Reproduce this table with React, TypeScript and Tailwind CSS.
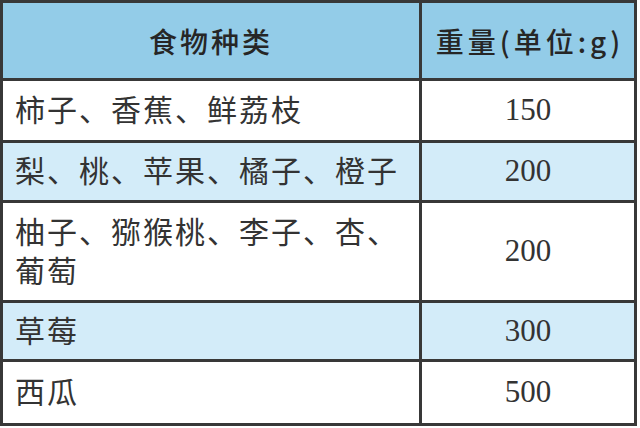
const rows = [
  { name: "柿子、香蕉、鲜荔枝", weight: "150", tint: false, h: "h-[62px]" },
  { name: "梨、桃、苹果、橘子、橙子", weight: "200", tint: true, h: "h-[60px]" },
  { name: "柚子、猕猴桃、李子、杏、葡萄", weight: "200", tint: false, h: "h-[100px]" },
  { name: "草莓", weight: "300", tint: true, h: "h-[59px]" },
  { name: "西瓜", weight: "500", tint: false, h: "h-[64px]" },
];

const cell = "border-r-[3px] border-b-[3px] border-[#383838] flex items-center";

export default function App() {
  return (
    <div className="w-[640px] h-[428px] bg-white">
      <div className="w-[637px] grid grid-cols-[419px_215px] border-l-[3px] border-t-[3px] border-[#383838] text-[#333] font-['Liberation_Serif','Noto_Sans_CJK_SC',serif]">
        {/* header */}
        <div className={`${cell} h-[78px] justify-center bg-[#93cce8] font-['Noto_Sans_CJK_SC',sans-serif] font-medium text-[28px] tracking-[3px] text-[#262626]`}>
          食物种类
        </div>
        <div className={`${cell} h-[78px] justify-center bg-[#93cce8] font-['Noto_Sans_CJK_SC',sans-serif] font-medium text-[28px] tracking-[4px] text-[#262626]`}>
          <span className="pl-[4px]">重量(单位:g)</span>
        </div>

        {rows.map((r, i) => (
          <div key={i} className="contents">
            <div className={`${cell} ${r.h} ${r.tint ? "bg-[#d3ecf9]" : "bg-white"} pl-[12px] pr-2 text-[30px] leading-[39px] tracking-[2px]`}>
              <span>{r.name}</span>
            </div>
            <div className={`${cell} ${r.h} ${r.tint ? "bg-[#d3ecf9]" : "bg-white"} justify-center text-[31px]`}>
              {r.weight}
            </div>
          </div>
        ))}
      </div>
    </div>
  );
}
